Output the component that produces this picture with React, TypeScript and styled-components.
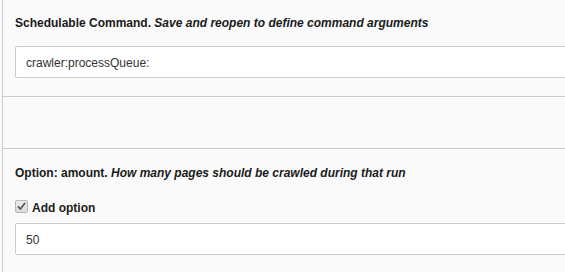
import React from "react";
import styled, { createGlobalStyle } from "styled-components";

const Global = createGlobalStyle`
  html, body {
    margin: 0;
    padding: 0;
    background: #fafafa;
    overflow: hidden;
  }
  body {
    font-family: "Liberation Sans", Arial, sans-serif;
    font-size: 12px;
    color: #212121;
  }
`;

const Panel = styled.div`
  margin-left: 2px;
  min-height: 272px;
  border-left: 1px solid #cccccc;
  background: #fafafa;
  overflow: hidden;
`;

const Section = styled.div<{ $pt: number; $pb: number; $h?: number }>`
  padding: ${(p) => p.$pt}px 0 ${(p) => p.$pb}px 12px;
  ${(p) => (p.$h ? `height: ${p.$h}px; box-sizing: border-box;` : "")}
  border-bottom: 1px solid #cccccc;
  &:last-child {
    border-bottom: none;
  }
`;

const Heading = styled.div<{ $mb: number }>`
  font-weight: bold;
  line-height: 18px;
  margin-bottom: ${(p) => p.$mb}px;
  color: #1a1a1a;
  white-space: nowrap;
  em {
    font-style: italic;
  }
`;

const TextInput = styled.input`
  display: block;
  box-sizing: border-box;
  width: calc(100% + 20px);
  height: 32px;
  margin: 0;
  padding: 6px 10px 4px;
  border: 1px solid #cccccc;
  border-radius: 2px;
  background: #ffffff;
  font-family: "Liberation Sans", Arial, sans-serif;
  font-size: 12px;
  line-height: 18px;
  color: #333333;
  outline: none;
`;

const CheckRow = styled.label`
  display: flex;
  align-items: flex-start;
  gap: 4px;
  line-height: 18px;
  font-weight: bold;
  margin-bottom: 6px;
  color: #1a1a1a;
`;

const CheckBox = styled.span`
  display: inline-flex;
  align-items: center;
  justify-content: center;
  box-sizing: border-box;
  width: 13px;
  height: 13px;
  margin-top: 1px;
  border: 1px solid #b8b8b8;
  border-radius: 2px;
  background: linear-gradient(#ececec, #dcdcdc);
`;

export default function App() {
  return (
    <>
      <Global />
      <Panel>
        <Section $pt={14} $pb={18}>
          <Heading $mb={14}>
            Schedulable Command. <em>Save and reopen to define command arguments</em>
          </Heading>
          <TextInput readOnly value="crawler:processQueue:" />
        </Section>
        <Section $pt={0} $pb={0} $h={52} />
        <Section $pt={15} $pb={20}>
          <Heading $mb={17}>
            Option: amount. <em>How many pages should be crawled during that run</em>
          </Heading>
          <CheckRow>
            <CheckBox>
              <svg width="9" height="9" viewBox="0 0 9 9">
                <path
                  d="M1.3 4.8 L3.4 7 L7.8 1.3"
                  fill="none"
                  stroke="#555555"
                  strokeWidth="1.7"
                  strokeLinecap="round"
                  strokeLinejoin="round"
                />
              </svg>
            </CheckBox>
            Add option
          </CheckRow>
          <TextInput readOnly value="50" />
        </Section>
      </Panel>
    </>
  );
}
